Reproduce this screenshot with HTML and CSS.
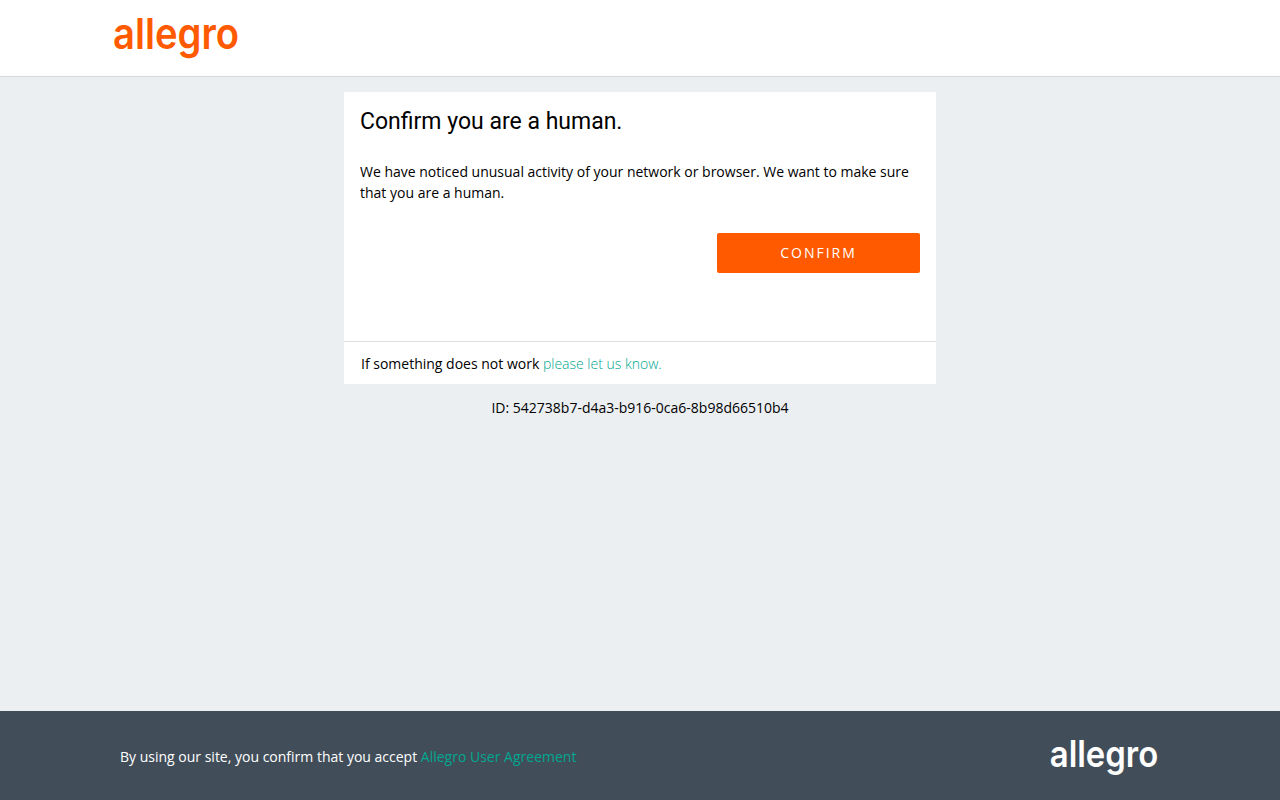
FILE: index.html
```html
<!DOCTYPE html>
<html lang="en">
<head>
<meta charset="utf-8">
<title>Allegro</title>
<link rel="stylesheet" href="styles.css">
</head>
<body>
<header class="header">
  <svg class="logo" viewBox="0 0 124 43" role="img" aria-label="allegro">
    <text class="wordmark" x="-1" y="32.6" textLength="126" lengthAdjust="spacingAndGlyphs">allegro</text>
  </svg>
</header>
<main class="main">
  <section class="card">
    <div class="content">
      <h1 class="title">Confirm you are a human.</h1>
      <p class="message">We have noticed unusual activity of your network or browser. We want to make sure that you are a human.</p>
      <button class="confirm" type="button">CONFIRM</button>
    </div>
    <div class="help">If something does not work <a class="link help-link" href="#">please let us know.</a></div>
  </section>
  <p class="request-id">ID: 542738b7-d4a3-b916-0ca6-8b98d66510b4</p>
</main>
<footer class="footer">
  <p class="terms">By using our site, you confirm that you accept <a class="link" href="#">Allegro User Agreement</a></p>
  <svg class="logo logo-footer" viewBox="0 0 124 43" role="img" aria-label="allegro">
    <text class="wordmark" x="-1" y="32.6" textLength="126" lengthAdjust="spacingAndGlyphs">allegro</text>
  </svg>
</footer>
</body>
</html>
```
FILE: styles.css
```css
* { box-sizing: border-box; }
body {
  margin: 0;
  min-height: 100vh;
  display: flex;
  flex-direction: column;
  background: #ebeff2;
  color: #000;
  font: 14px/21px "Open Sans", sans-serif;
}
p, h1 { margin: 0; }
.header {
  height: 77px;
  padding: 16px 114px 0;
  background: #fff;
  border-bottom: 1px solid #d3dade;
}
.logo {
  display: block;
  width: 124px;
  height: 43px;
  overflow: visible;
  fill: #ff5a00;
}
.wordmark {
  font: 600 43px Inter, sans-serif;
}
.main {
  flex: 1;
  width: 592px;
  margin: 0 auto;
  padding-top: 15px;
}
.card {
  height: 292px;
  display: flex;
  flex-direction: column;
  background: #fff;
}
.content {
  flex: 1;
  display: flex;
  flex-direction: column;
  padding: 15px 16px 0;
}
.title {
  font: 400 23px/30px Roboto, sans-serif;
}
.message { margin-top: 24px; }
.confirm {
  align-self: flex-end;
  width: 203px;
  height: 40px;
  margin-top: 30px;
  padding: 0;
  border: 0;
  border-radius: 2px;
  background: #ff5a00;
  color: #fff;
  font: 14px/40px "Open Sans", sans-serif;
  letter-spacing: 2px;
}
.help {
  height: 43px;
  padding: 11px 17px 0;
  border-top: 1px solid #ddd;
}
.link {
  color: #00a790;
  text-decoration: none;
}
.help-link { font-weight: 300; }
.request-id {
  margin-top: 13px;
  text-align: center;
}
.footer {
  display: flex;
  justify-content: space-between;
  height: 89px;
  padding: 28px 122px 0 120px;
  background: #414e59;
}
.terms {
  margin-top: 7px;
  color: #fff;
}
.logo-footer {
  width: 108px;
  height: 37px;
  fill: #fff;
}
```
